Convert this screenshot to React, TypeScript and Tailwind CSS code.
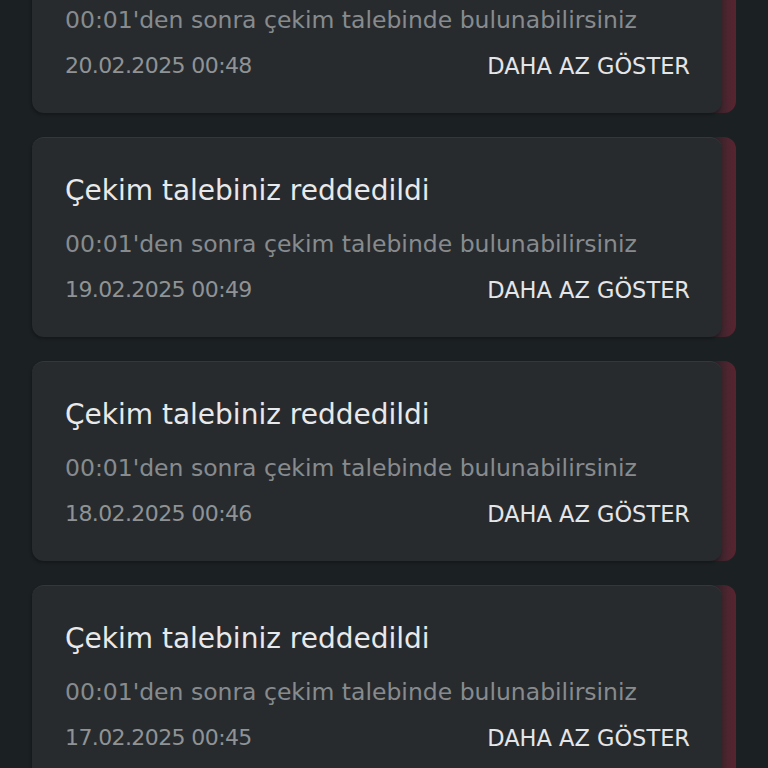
import React from 'react'

type Notice = {
  title: string
  body: string
  date: string
}

const notices: Notice[] = [
  { title: 'Çekim talebiniz reddedildi', body: "00:01'den sonra çekim talebinde bulunabilirsiniz", date: '20.02.2025 00:48' },
  { title: 'Çekim talebiniz reddedildi', body: "00:01'den sonra çekim talebinde bulunabilirsiniz", date: '19.02.2025 00:49' },
  { title: 'Çekim talebiniz reddedildi', body: "00:01'den sonra çekim talebinde bulunabilirsiniz", date: '18.02.2025 00:46' },
  { title: 'Çekim talebiniz reddedildi', body: "00:01'den sonra çekim talebinde bulunabilirsiniz", date: '17.02.2025 00:45' },
]

function NoticeCard({ notice }: { notice: Notice }) {
  return (
    <div className="rounded-xl bg-[linear-gradient(to_right,transparent_96%,#4f2530_99%,#57242f)] pr-[14px]">
      <div className="h-[200px] rounded-xl border-t border-[#33383b] bg-[#272b2e] pl-[33px] pr-[32px] pt-[36px] shadow-[-1px_2px_3px_rgba(0,0,0,0.25)]">
        <h3 className="text-[28px] font-normal leading-[34px] text-[#e8e9ea]">{notice.title}</h3>
        <p className="mt-[21px] text-[23.5px] leading-[30px] text-[#888b8e]">{notice.body}</p>
        <div className="mt-4 flex items-center justify-between leading-[30px]">
          <span className="text-[22px] tracking-[-0.6px] text-[#909396]">{notice.date}</span>
          <button type="button" className="text-[22.5px] uppercase text-[#e4e5e6]">
            Daha az göster
          </button>
        </div>
      </div>
    </div>
  )
}

export default function App() {
  return (
    <div className="h-[768px] overflow-hidden bg-[#1b2022] font-['DejaVu_Sans',sans-serif]">
      <div className="-mt-[87px] flex flex-col gap-6 px-8">
        {notices.map((n) => (
          <NoticeCard key={n.date} notice={n} />
        ))}
      </div>
    </div>
  )
}
